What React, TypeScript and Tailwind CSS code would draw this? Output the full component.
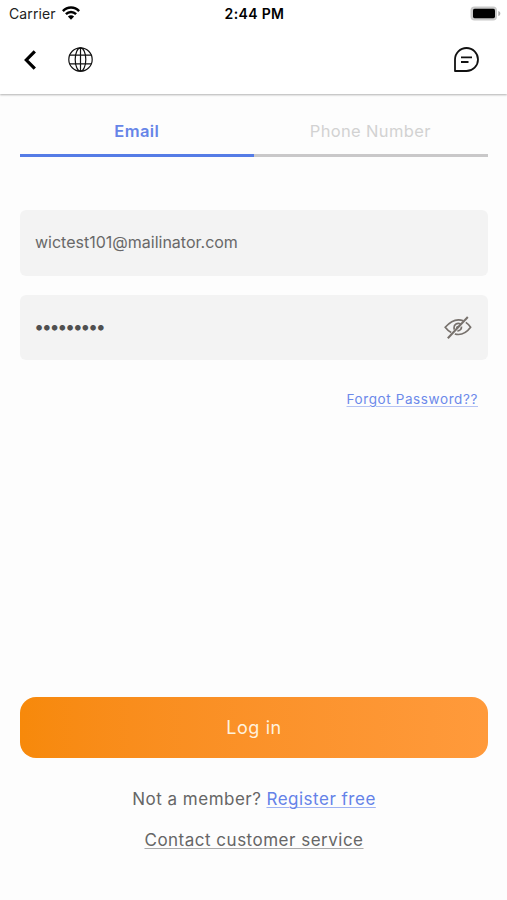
import { useState } from "react"

const TABS = ["Email", "Phone Number"]

function StatusBar() {
  return (
    <div className="grid h-7 grid-cols-3 items-center pl-[9px] pr-[6px] text-black">
      <div className="flex items-center gap-[6px]">
        <span className="text-[14px] leading-5 tracking-[0.1px] text-[#222]">Carrier</span>
        <svg className="-mt-0.5" width="18" height="14" viewBox="0 0 18 14" fill="none" stroke="currentColor" strokeWidth="2.5">
          <path d="M0.9 5.1C5.4 0.3 12.6 0.3 17.1 5.1" />
          <path d="M3.9 8.1C6.8 5.2 11.2 5.2 14.1 8.1" />
          <path d="M9 13.8L5.9 10.6C7.6 8.9 10.4 8.9 12.1 10.6Z" fill="currentColor" stroke="none" />
        </svg>
      </div>
      <span className="-ml-px whitespace-nowrap text-center text-[14px] font-semibold leading-5 tracking-[0.35px]">
        2:44 PM
      </span>
      <svg className="-mt-0.5 justify-self-end" width="31" height="15" viewBox="0 0 31 15">
        <rect x="0.5" y="0.5" width="26.5" height="14" rx="4" fill="#c9c9c9" />
        <rect x="3" y="2.8" width="22" height="9.4" rx="1.6" fill="#000" />
        <path d="M28.3 4.9C31 6 31 9 28.3 10.1Z" fill="#aaa" />
      </svg>
    </div>
  )
}

function Header() {
  return (
    <header className="h-[94px] bg-white shadow-[0_1px_2px_rgba(0,0,0,0.3)]">
      <StatusBar />
      <div className="flex h-[63px] items-center px-6 text-[#111]">
        <svg width="12" height="20" viewBox="0 0 12 20" fill="none" stroke="#000" strokeWidth="3.2">
          <path d="M10.8 1.3L2.3 10L10.8 18.7" />
        </svg>
        <svg
          className="ml-8"
          width="25"
          height="25"
          viewBox="0 0 25 25"
          fill="none"
          stroke="currentColor"
          strokeWidth="1.2"
        >
          <circle cx="12.5" cy="12.5" r="11.7" />
          <ellipse cx="12.5" cy="12.5" rx="5.3" ry="11.7" />
          <path d="M12.5 0.8V24.2M1.6 8.2H23.4M1.6 16.8H23.4" />
        </svg>
        <svg
          className="ml-auto mr-1"
          width="25"
          height="25"
          viewBox="0 0 25 25"
          fill="none"
          stroke="currentColor"
          strokeWidth="1.8"
          strokeLinejoin="round"
        >
          <path d="M1 24V12.5A11.5 11.5 0 1 1 12.5 24Z" />
          <path d="M7 10.3H18M7 15H14.5" />
        </svg>
      </div>
    </header>
  )
}

function HiddenIcon() {
  return (
    <svg width="28" height="24" viewBox="0 0 28 24" fill="none" stroke="#77716c" strokeWidth="1.7">
      <path d="M19.4 4.8C13.5 2.4 7 4.6 1.2 11.3C2.8 13.4 4.8 15.2 7.2 16.6" />
      <path d="M21.8 6.4C23.8 7.7 25.4 9.4 26.6 11.3C22.2 17.2 16.2 19.4 10.8 18" />
      <path d="M16.6 8C13.2 6.4 10 8.5 10 11.8C10 12.6 10.2 13.1 10.4 13.6" />
      <path d="M17.5 10.6C17.7 13.2 15.6 15 13.4 14.8" />
      <path d="M12.8 12.8C12.4 11 13.4 10 15 10.4" strokeWidth="1.3" />
      <path d="M3.8 22.2L23.8 1" strokeWidth="2" />
    </svg>
  )
}

export default function App() {
  const [activeTab, setActiveTab] = useState("Email")

  return (
    <div className="flex h-[900px] w-[507px] flex-col bg-[#fdfdfd] font-['Inter',sans-serif]">
      <Header />

      <main className="flex flex-1 flex-col pl-5 pr-[19px]">
        {/* Tabs */}
        <div className="mt-[17px] flex h-[46px]">
          {TABS.map((tab) => (
            <button
              key={tab}
              onClick={() => setActiveTab(tab)}
              className={
                activeTab === tab
                  ? "flex-1 border-b-[3px] border-[#557ce6] pb-[3px] text-[16.5px] font-semibold tracking-[0.4px] text-[#6685e8]"
                  : "flex-1 border-b-[3px] border-[#c9c8c9] pb-[3px] pr-px text-[16.5px] tracking-[0.35px] text-[#d2d2d2]"
              }
            >
              {tab}
            </button>
          ))}
        </div>

        {/* Credentials */}
        <div className="mt-[53px] flex h-[66px] items-center rounded-md bg-[#f3f3f3] px-[15px] pb-0.5 text-[16px] text-[#686868]">
          wictest101@mailinator.com
        </div>
        <div className="mt-[19px] flex h-[65px] items-center justify-between rounded-md bg-[#f3f3f3] pl-[14px] pr-4 text-[#505050]">
          <span className="pb-0.5 text-[18px] tracking-[-2.4px]">•••••••••</span>
          <HiddenIcon />
        </div>
        <a
          href="#"
          className="mr-[10px] mt-[31px] self-end text-[13.5px] leading-[17px] tracking-[0.6px] text-[#6c89ea] underline decoration-[#b5c3f3] decoration-1 underline-offset-2"
        >
          Forgot Password??
        </a>

        {/* Actions */}
        <button className="mb-[30px] mt-auto h-[61px] rounded-2xl bg-linear-to-r from-[#f7890a] to-[#ff9a3b] text-[18px] tracking-[0.6px] text-[#fff1dd]">
          Log in
        </button>
        <p className="flex justify-center gap-[5px] text-[17px] leading-[22px] tracking-[0.5px] text-[#666]">
          <span>Not a member?</span>
          <a href="#" className="text-[#6482e8] underline decoration-[#9fb2f3] decoration-1 underline-offset-2">
            Register free
          </a>
        </p>
        <a
          href="#"
          className="mb-[49px] mt-[20px] self-center text-[17px] leading-[21px] tracking-[0.5px] text-[#666] underline decoration-[#aaa] decoration-1 underline-offset-2"
        >
          Contact customer service
        </a>
      </main>
    </div>
  )
}
